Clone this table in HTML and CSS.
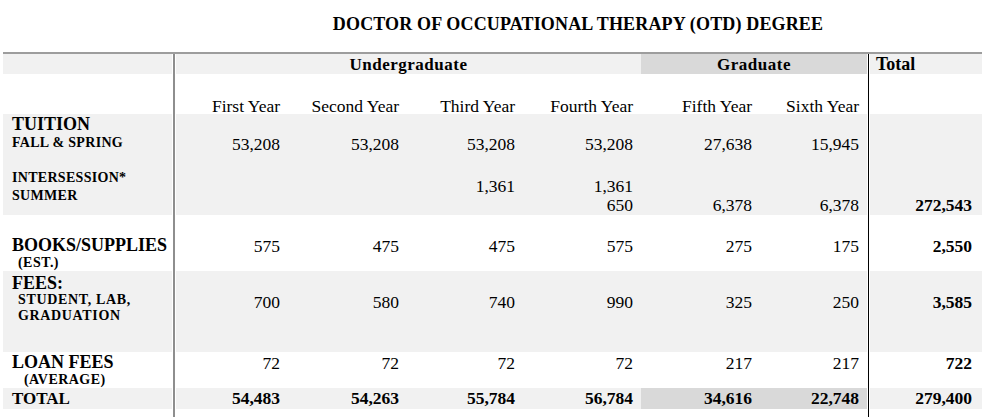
FILE: index.html
```html
<!DOCTYPE html>
<html>
<head>
<meta charset="utf-8">
<title>OTD Degree Costs</title>
<link rel="stylesheet" href="styles.css">
</head>
<body>
<h1 class="title">DOCTOR OF OCCUPATIONAL THERAPY (OTD) DEGREE</h1>
<div class="sheet">
  <div class="rule rule-ug"></div>
  <div class="rule rule-total"></div>

  <div class="row head1 shade">
    <div class="lab"></div>
    <div class="group ug">Undergraduate</div>
    <div class="group grad dk">Graduate</div>
    <div class="tothead">Total</div>
  </div>

  <div class="row head2">
    <div class="lab"></div>
    <div class="n">First Year</div>
    <div class="n">Second Year</div>
    <div class="n">Third Year</div>
    <div class="n">Fourth Year</div>
    <div class="n">Fifth Year</div>
    <div class="n">Sixth Year</div>
    <div class="t"></div>
  </div>

  <div class="row tuition1 shade">
    <div class="lab"><div class="main">TUITION</div><div class="sub">FALL &amp; SPRING</div></div>
    <div class="n">53,208</div>
    <div class="n">53,208</div>
    <div class="n">53,208</div>
    <div class="n">53,208</div>
    <div class="n">27,638</div>
    <div class="n">15,945</div>
    <div class="t"></div>
  </div>

  <div class="row tuition2 shade">
    <div class="lab"><div class="sub">INTERSESSION*</div><div class="sub">SUMMER</div></div>
    <div class="n"></div>
    <div class="n"></div>
    <div class="n">1,361</div>
    <div class="n">1,361<br>650</div>
    <div class="n low">6,378</div>
    <div class="n low">6,378</div>
    <div class="t low">272,543</div>
  </div>

  <div class="row books">
    <div class="lab"><div class="main">BOOKS/SUPPLIES</div><div class="note">(EST.)</div></div>
    <div class="n">575</div>
    <div class="n">475</div>
    <div class="n">475</div>
    <div class="n">575</div>
    <div class="n">275</div>
    <div class="n">175</div>
    <div class="t">2,550</div>
  </div>

  <div class="row fees shade">
    <div class="lab"><div class="main">FEES:</div><div class="sub2">STUDENT, LAB,</div><div class="sub2">GRADUATION</div></div>
    <div class="n">700</div>
    <div class="n">580</div>
    <div class="n">740</div>
    <div class="n">990</div>
    <div class="n">325</div>
    <div class="n">250</div>
    <div class="t">3,585</div>
  </div>

  <div class="row loan">
    <div class="lab"><div class="main">LOAN FEES</div><div class="note avg">(AVERAGE)</div></div>
    <div class="n">72</div>
    <div class="n">72</div>
    <div class="n">72</div>
    <div class="n">72</div>
    <div class="n">217</div>
    <div class="n">217</div>
    <div class="t">722</div>
  </div>

  <div class="row total shade">
    <div class="lab"><div class="main">TOTAL</div></div>
    <div class="n">54,483</div>
    <div class="n">54,263</div>
    <div class="n">55,784</div>
    <div class="n">56,784</div>
    <div class="n dk">34,616</div>
    <div class="n dk">22,748</div>
    <div class="t">279,400</div>
  </div>
</div>
</body>
</html>
```

FILE: styles.css
```css
html, body {
  margin: 0;
  padding: 0;
  background: #fff;
}

body {
  font-family: "Liberation Serif", "Times New Roman", serif;
  color: #000;
  overflow: hidden;
}

.title {
  margin: 14px 4px 0 174px;
  font-size: 18px;
  line-height: 20px;
  font-weight: bold;
  letter-spacing: 0.15px;
  text-align: center;
}

.sheet {
  margin: 18px 0 0 3px;
  width: 979px;
  border-top: 2px solid #9d9d9d;
  display: grid;
  grid-template-columns: 169px 4px 112px 119px 116px 118px 119px 107px 3px 112px;
  grid-template-rows: 20px 40px 49px 52px 56px 81px 36px 21px 12px;
}

.row {
  display: contents;
}

.rule {
  grid-row: 1 / -1;
}

.rule-ug {
  grid-column: 2;
  background: linear-gradient(to right, transparent 1px, #8e8e8e 1px, #8e8e8e 3px, transparent 3px);
}

.rule-total {
  grid-column: 9;
  background: linear-gradient(to right, transparent 1px, #000 1px, #000 2px, transparent 2px);
}

.shade > div {
  background: #f1f1f1;
}

.shade > .dk {
  background: #d9d9d9;
}

/* header rows */
.group {
  grid-column: span 4;
  text-align: center;
  font-size: 17px;
  font-weight: bold;
  letter-spacing: 0.5px;
  line-height: 21px;
}

.grad {
  grid-column: span 2;
}

.tothead {
  padding-left: 6px;
  font-size: 18px;
  font-weight: bold;
  line-height: 21px;
}

/* label column */
.lab {
  padding-left: 9px;
  font-weight: bold;
}

.main {
  font-size: 18px;
  line-height: 20px;
}

.sub {
  font-size: 14px;
  line-height: 18px;
  letter-spacing: 0.3px;
}

.sub2 {
  font-size: 14px;
  line-height: 16px;
  padding-left: 6px;
  letter-spacing: 0.65px;
}

.note {
  font-size: 14px;
  line-height: 16px;
  padding-left: 6px;
  letter-spacing: 0.45px;
}

.note.avg {
  padding-left: 12px;
}

/* number cells */
.n, .t {
  text-align: right;
  font-size: 17.5px;
  line-height: 20px;
  white-space: nowrap;
}

.n {
  padding-right: 8px;
}

.t {
  padding-right: 10px;
  font-weight: bold;
}

.head2 .n {
  padding-top: 24px;
  line-height: 16px;
}

.tuition1 .lab {
  padding-top: 1px;
}

.tuition1 .main {
  line-height: 19px;
}

.tuition1 .n {
  padding-top: 20px;
}

.tuition2 .lab {
  padding-top: 6px;
}

.tuition2 .n,
.tuition2 .t {
  padding-top: 14px;
  line-height: 19px;
}

.tuition2 .low {
  padding-top: 33px;
}

.books .lab {
  padding-top: 20px;
}

.books .n,
.books .t {
  padding-top: 21px;
}

.fees .lab {
  padding-top: 3px;
}

.fees .main {
  line-height: 18px;
}

.fees .n,
.fees .t {
  padding-top: 21px;
}

.loan .n,
.loan .t {
  padding-top: 1px;
}

.total .main {
  font-size: 17px;
  line-height: 21px;
}

.total .n,
.total .t {
  font-weight: bold;
  line-height: 21px;
}
```
